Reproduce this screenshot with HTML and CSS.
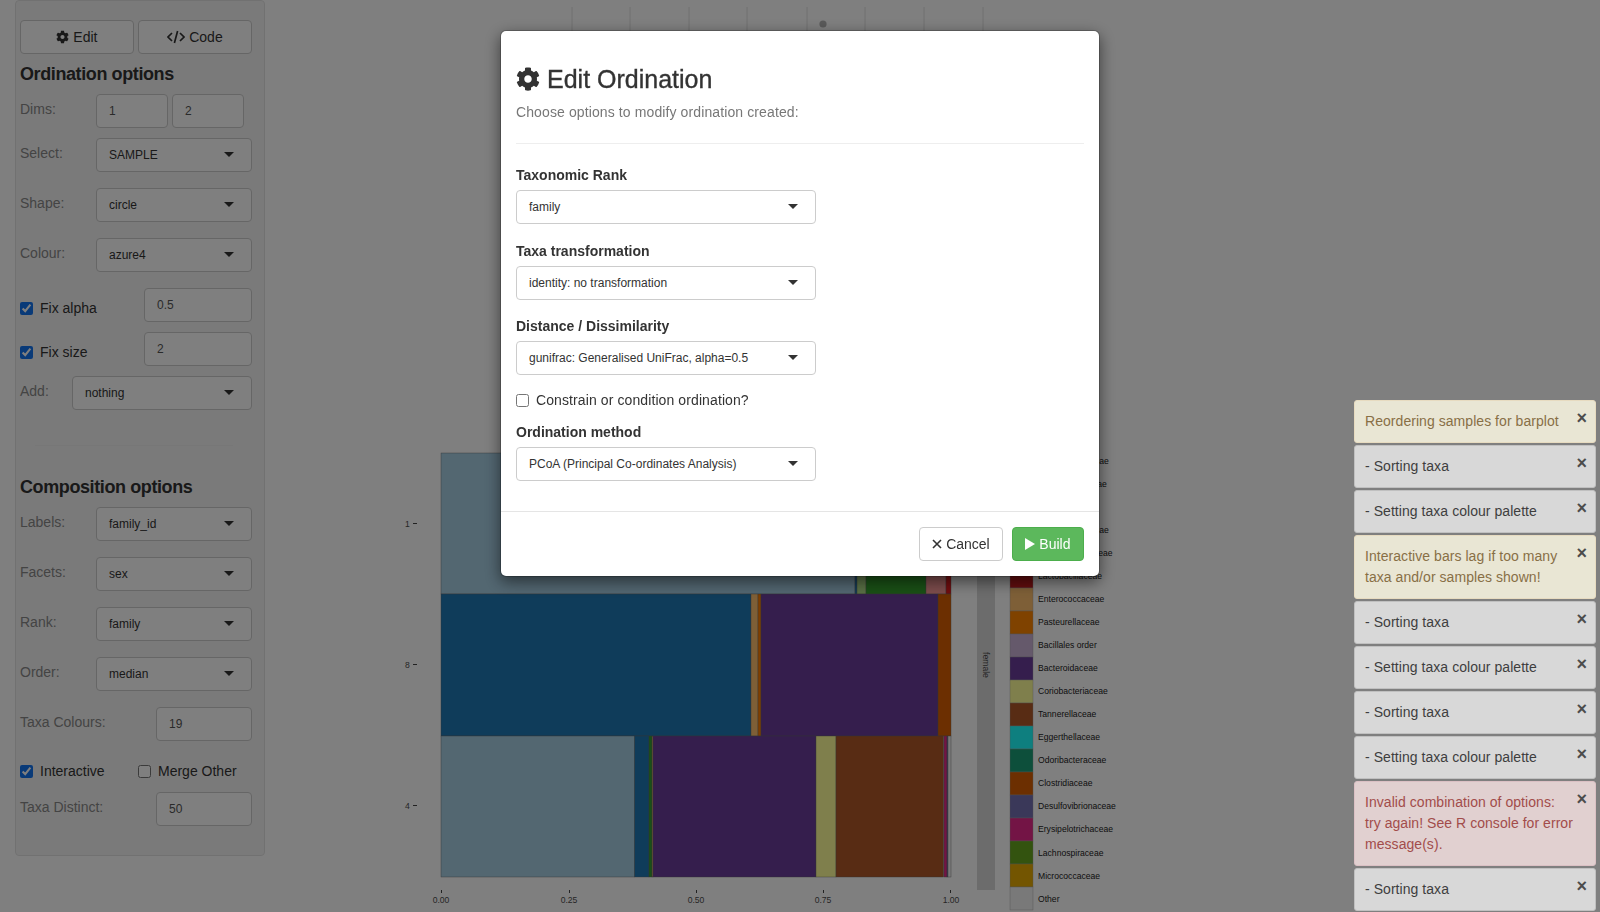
FILE: index.html
```html
<!DOCTYPE html>
<html lang="en">
<head>
  <meta charset="UTF-8" />
  <title>Edit Ordination</title>
  <link rel="stylesheet" href="styles.css">
</head>
<body>
  <svg class="icon-defs" width="0" height="0">
    <symbol id="cog" viewBox="0 0 512 512">
      <path d="M487.4 315.7l-42.6-24.6c4.3-23.2 4.3-47 0-70.2l42.6-24.6c4.9-2.8 7.1-8.6 5.5-14-11.1-35.6-30-67.8-54.7-94.6-3.8-4.1-10-5.1-14.8-2.3L380.8 110c-17.9-15.4-38.5-27.3-60.8-35.1V25.8c0-5.6-3.9-10.5-9.4-11.7-36.7-8.2-74.3-7.8-109.2 0-5.5 1.2-9.4 6.1-9.4 11.7V75c-22.2 7.9-42.8 19.8-60.8 35.1L88.7 85.5c-4.9-2.8-11-1.9-14.8 2.3-24.7 26.7-43.6 58.9-54.7 94.6-1.7 5.4.6 11.2 5.5 14L67.3 221c-4.3 23.2-4.3 47 0 70.2l-42.6 24.6c-4.9 2.8-7.1 8.6-5.5 14 11.1 35.6 30 67.8 54.7 94.6 3.8 4.1 10 5.1 14.8 2.3l42.6-24.6c17.9 15.4 38.5 27.3 60.8 35.1v49.2c0 5.6 3.9 10.5 9.4 11.7 36.7 8.2 74.3 7.8 109.2 0 5.5-1.2 9.4-6.1 9.4-11.7v-49.2c22.2-7.9 42.8-19.8 60.8-35.1l42.6 24.6c4.9 2.8 11 1.9 14.8-2.3 24.7-26.7 43.6-58.9 54.7-94.6 1.5-5.5-.7-11.3-5.6-14.1zM256 336c-44.1 0-80-35.9-80-80s35.9-80 80-80 80 35.9 80 80-35.9 80-80 80z" fill="currentColor"/>
    </symbol>
  </svg>

  <div class="page">
    <div class="sidebar">
      <div class="well">
        <div class="btn-row">
          <button class="btn"><svg class="ico-cog"><use href="#cog"/></svg> Edit</button>
          <button class="btn">
            <svg class="ico-code" viewBox="0 0 18 14"><path d="M5 3 1 7l4 4M13 3l4 4-4 4M10.6 1 7.4 13" fill="none" stroke="currentColor" stroke-width="1.7"/></svg> Code
          </button>
        </div>

        <h4 class="side-title">Ordination options</h4>

        <div class="opt-row dims-row">
          <label class="opt-label w-76">Dims:</label>
          <div class="input w-72">1</div>
          <div class="input w-72">2</div>
        </div>
        <div class="opt-row">
          <label class="opt-label w-76">Select:</label>
          <div class="select grow">SAMPLE<span class="caret"></span></div>
        </div>
        <div class="opt-row">
          <label class="opt-label w-76">Shape:</label>
          <div class="select grow">circle<span class="caret"></span></div>
        </div>
        <div class="opt-row">
          <label class="opt-label w-76">Colour:</label>
          <div class="select grow">azure4<span class="caret"></span></div>
        </div>
        <div class="opt-row">
          <label class="check-label w-124"><input type="checkbox" checked /> Fix alpha</label>
          <div class="input grow">0.5</div>
        </div>
        <div class="opt-row tight">
          <label class="check-label w-124"><input type="checkbox" checked /> Fix size</label>
          <div class="input grow">2</div>
        </div>
        <div class="opt-row tight">
          <label class="opt-label w-52">Add:</label>
          <div class="select grow">nothing<span class="caret"></span></div>
        </div>

        <hr class="side-rule" />

        <h4 class="side-title comp-title">Composition options</h4>

        <div class="opt-row tight">
          <label class="opt-label w-76">Labels:</label>
          <div class="select grow">family_id<span class="caret"></span></div>
        </div>
        <div class="opt-row">
          <label class="opt-label w-76">Facets:</label>
          <div class="select grow">sex<span class="caret"></span></div>
        </div>
        <div class="opt-row">
          <label class="opt-label w-76">Rank:</label>
          <div class="select grow">family<span class="caret"></span></div>
        </div>
        <div class="opt-row">
          <label class="opt-label w-76">Order:</label>
          <div class="select grow">median<span class="caret"></span></div>
        </div>
        <div class="opt-row">
          <label class="opt-label w-136">Taxa Colours:</label>
          <div class="input grow">19</div>
        </div>
        <div class="check-row">
          <label class="check-plain w-118"><input type="checkbox" checked /> Interactive</label>
          <label class="check-plain"><input type="checkbox" /> Merge Other</label>
        </div>
        <div class="opt-row tight">
          <label class="opt-label w-136">Taxa Distinct:</label>
          <div class="input grow">50</div>
        </div>
      </div>
    </div>

    <div class="plot-col">
      <svg class="plot" viewBox="280 0 1320 912" width="1320" height="912">
        <g stroke="#e0e0e0" stroke-width="1">
          <path d="M572 7V40M630 7V40M689 7V40M747 7V40M807 7V40M865 7V40M924 7V40M983 7V40"/>
        </g>
        <circle cx="823" cy="24" r="3.6" fill="#b4b4b4"/>

        <g stroke="#666" stroke-width="0.4">
          <rect x="441" y="453" width="414" height="141" fill="#a6cee3"/>
          <rect x="855" y="453" width="2" height="141" fill="#1f78b4"/>
          <rect x="857" y="453" width="9" height="141" fill="#b2df8a"/>
          <rect x="866" y="453" width="60" height="141" fill="#33a02c"/>
          <rect x="926" y="453" width="20" height="141" fill="#fb9a99"/>
          <rect x="946" y="453" width="5" height="141" fill="#e31a1c"/>

          <rect x="441" y="594" width="310" height="142" fill="#1f78b4"/>
          <rect x="751" y="594" width="7" height="142" fill="#fdbf6f"/>
          <rect x="758" y="594" width="3" height="142" fill="#ff7f00"/>
          <rect x="761" y="594" width="177" height="142" fill="#6a3d9a"/>
          <rect x="938" y="594" width="13" height="142" fill="#d95f02"/>

          <rect x="441" y="736" width="193.5" height="141" fill="#a6cee3"/>
          <rect x="634.5" y="736" width="14.5" height="141" fill="#1f78b4"/>
          <rect x="649" y="736" width="3" height="141" fill="#33a02c"/>
          <rect x="652" y="736" width="1" height="141" fill="#fdbf6f"/>
          <rect x="653" y="736" width="163" height="141" fill="#6a3d9a"/>
          <rect x="816" y="736" width="20" height="141" fill="#ffff99"/>
          <rect x="836" y="736" width="107.5" height="141" fill="#b15928"/>
          <rect x="944" y="736" width="3" height="141" fill="#e7298a"/>
          <rect x="947" y="736" width="1" height="141" fill="#7570b3"/>
          <rect x="948" y="736" width="3" height="141" fill="#f2f2f2"/>
        </g>

        <rect x="977" y="453" width="18" height="437" fill="#d9d9d9"/>
        <text class="tick" transform="translate(983 665) rotate(90)" text-anchor="middle">female</text>

        <g class="tick">
          <text x="405" y="527">1</text>
          <text x="405" y="668">8</text>
          <text x="405" y="809">4</text>
          <text x="441" y="903" text-anchor="middle">0.00</text>
          <text x="569" y="903" text-anchor="middle">0.25</text>
          <text x="696" y="903" text-anchor="middle">0.50</text>
          <text x="823" y="903" text-anchor="middle">0.75</text>
          <text x="951" y="903" text-anchor="middle">1.00</text>
        </g>
        <path d="M413 523.5h4M413 664.5h4M413 805.5h4M441.5 890v3M569.5 890v3M696.5 890v3M823.5 890v3M950.5 890v3" stroke="#444" stroke-width="1"/>

        <g stroke="#a0a0a0" stroke-width="0.4">
          <rect x="1010" y="450" width="23" height="23" fill="#a6cee3"/>
          <rect x="1010" y="473" width="23" height="23" fill="#1f78b4"/>
          <rect x="1010" y="496" width="23" height="23" fill="#b2df8a"/>
          <rect x="1010" y="519" width="23" height="23" fill="#33a02c"/>
          <rect x="1010" y="542" width="23" height="23" fill="#fb9a99"/>
          <rect x="1010" y="565" width="23" height="23" fill="#c51a1c"/>
          <rect x="1010" y="588" width="23" height="23" fill="#fdbf6f"/>
          <rect x="1010" y="611" width="23" height="23" fill="#ff8500"/>
          <rect x="1010" y="634" width="23" height="23" fill="#cab2d6"/>
          <rect x="1010" y="657" width="23" height="23" fill="#6a3d9a"/>
          <rect x="1010" y="680" width="23" height="23" fill="#ffff99"/>
          <rect x="1010" y="703" width="23" height="23" fill="#b15928"/>
          <rect x="1010" y="726" width="23" height="23" fill="#1cffff"/>
          <rect x="1010" y="749" width="23" height="23" fill="#1b9e77"/>
          <rect x="1010" y="772" width="23" height="23" fill="#d95f02"/>
          <rect x="1010" y="795" width="23" height="23" fill="#7570b3"/>
          <rect x="1010" y="818" width="23" height="23" fill="#e7298a"/>
          <rect x="1010" y="841" width="23" height="23" fill="#66a61e"/>
          <rect x="1010" y="864" width="23" height="23" fill="#e6ab02"/>
          <rect x="1010" y="887" width="23" height="23" fill="#f2f2f2"/>
        </g>
        <g class="legend-text">
          <text x="1038" y="463.5">Ruminococcaceae</text>
          <text x="1038" y="486.5">Streptococcaceae</text>
          <text x="1038" y="509.5">Rikenellaceae</text>
          <text x="1038" y="532.5">Bifidobacteriaceae</text>
          <text x="1038" y="555.5">Enterobacteriaceae</text>
          <text x="1038" y="578.5">Lactobacillaceae</text>
          <text x="1038" y="601.5">Enterococcaceae</text>
          <text x="1038" y="624.5">Pasteurellaceae</text>
          <text x="1038" y="647.5">Bacillales order</text>
          <text x="1038" y="670.5">Bacteroidaceae</text>
          <text x="1038" y="693.5">Coriobacteriaceae</text>
          <text x="1038" y="716.5">Tannerellaceae</text>
          <text x="1038" y="739.5">Eggerthellaceae</text>
          <text x="1038" y="762.5">Odoribacteraceae</text>
          <text x="1038" y="785.5">Clostridiaceae</text>
          <text x="1038" y="808.5">Desulfovibrionaceae</text>
          <text x="1038" y="831.5">Erysipelotrichaceae</text>
          <text x="1038" y="856">Lachnospiraceae</text>
          <text x="1038" y="879">Micrococcaceae</text>
          <text x="1038" y="902">Other</text>
        </g>
      </svg>
    </div>
  </div>

  <div class="backdrop"></div>

  <div class="modal-wrap">
    <div class="modal">
      <div class="modal-body">
        <h3 class="modal-title"><svg class="ico-title"><use href="#cog"/></svg> Edit Ordination</h3>
        <p class="modal-sub">Choose options to modify ordination created:</p>
        <hr class="modal-rule" />

        <label class="field-label first">Taxonomic Rank</label>
        <div class="select wide">family<span class="caret"></span></div>

        <label class="field-label">Taxa transformation</label>
        <div class="select wide">identity: no transformation<span class="caret"></span></div>

        <label class="field-label third">Distance / Dissimilarity</label>
        <div class="select wide">gunifrac: Generalised UniFrac, alpha=0.5<span class="caret"></span></div>

        <label class="modal-check"><input type="checkbox" /> Constrain or condition ordination?</label>

        <label class="field-label method">Ordination method</label>
        <div class="select wide">PCoA (Principal Co-ordinates Analysis)<span class="caret"></span></div>
      </div>
      <div class="modal-footer">
        <button class="btn btn-cancel">
          <svg class="ico-x" viewBox="0 0 10 10"><path d="M1 1l8 8M9 1l-8 8" fill="none" stroke="currentColor" stroke-width="1.6"/></svg> Cancel
        </button>
        <button class="btn btn-build">
          <svg class="ico-play" viewBox="0 0 10 12"><path d="M0 0l10 6-10 6z" fill="currentColor"/></svg> Build
        </button>
      </div>
    </div>
  </div>

  <div class="notifications">
    <div class="note warn">Reordering samples for barplot<span class="note-x">×</span></div>
    <div class="note">- Sorting taxa<span class="note-x">×</span></div>
    <div class="note">- Setting taxa colour palette<span class="note-x">×</span></div>
    <div class="note warn">Interactive bars lag if too many taxa and/or samples shown!<span class="note-x">×</span></div>
    <div class="note">- Sorting taxa<span class="note-x">×</span></div>
    <div class="note">- Setting taxa colour palette<span class="note-x">×</span></div>
    <div class="note">- Sorting taxa<span class="note-x">×</span></div>
    <div class="note">- Setting taxa colour palette<span class="note-x">×</span></div>
    <div class="note error">Invalid combination of options: try again! See R console for error message(s).<span class="note-x">×</span></div>
    <div class="note">- Sorting taxa<span class="note-x">×</span></div>
  </div>
</body>
</html>
```

FILE: styles.css
```css
* {
  box-sizing: border-box;
}

html, body {
  margin: 0;
  height: 912px;
  overflow: hidden;
}

body {
  font-family: "Liberation Sans", Arial, sans-serif;
  font-size: 14px;
  line-height: 20px;
  color: #333;
  background: #fff;
}

.icon-defs {
  display: block;
  height: 0;
}

.page {
  display: flex;
  height: 912px;
}

.sidebar {
  width: 280px;
  flex: none;
  padding-left: 15px;
}

.well {
  width: 250px;
  height: 856px;
  padding: 19px 12px 0 4px;
  background: #f5f5f5;
  border: 1px solid #e3e3e3;
  border-radius: 4px;
}

.btn-row {
  display: flex;
  gap: 4px;
}

.btn {
  height: 34px;
  padding: 0 12px;
  font: inherit;
  color: #333;
  background: #fff;
  border: 1px solid #ccc;
  border-radius: 4px;
}

.btn-row .btn {
  flex: 1;
}

.ico-cog {
  width: 13px;
  height: 14px;
  vertical-align: -2px;
}

.ico-code {
  width: 18px;
  height: 14px;
  vertical-align: -2px;
}

.side-title {
  margin: 10px 0;
  font-size: 18px;
  line-height: 20px;
  font-weight: bold;
  letter-spacing: -0.4px;
}

.comp-title {
  margin-top: 0;
}

.opt-row {
  display: flex;
  margin-top: 16px;
}

.opt-row.tight {
  margin-top: 10px;
}

.dims-row {
  margin-top: 0;
  margin-bottom: -6px;
  gap: 4px;
}

.opt-label {
  flex: none;
  padding-top: 5px;
  color: #888;
}

.dims-row .opt-label {
  margin-right: -4px;
}

.w-52 { width: 52px; }
.w-72 { width: 72px; }
.w-76 { width: 76px; }
.w-118 { width: 118px; }
.w-124 { width: 124px; }
.w-136 { width: 136px; }
.grow { flex: 1; }

.input,
.select {
  position: relative;
  height: 34px;
  padding: 0 12px;
  font-size: 12px;
  line-height: 32px;
  color: #333;
  background: #fff;
  border: 1px solid #ccc;
  border-radius: 4px;
}

.input {
  color: #555;
}

.caret {
  position: absolute;
  top: 13px;
  right: 17px;
  border-top: 5px solid #333;
  border-left: 5px solid transparent;
  border-right: 5px solid transparent;
}

.check-label,
.check-plain,
.modal-check {
  display: flex;
  align-items: center;
  gap: 7px;
}

.check-label {
  flex: none;
  padding-top: 6px;
}

input[type="checkbox"] {
  width: 13px;
  height: 13px;
  margin: 0;
  accent-color: #1274f0;
}

.side-rule {
  margin: 35px 19px 31px 15px;
  border: 0;
  border-top: 1px solid #eee;
}

.check-row {
  display: flex;
  height: 22px;
  margin-top: 19px;
  align-items: center;
}

.plot-col {
  flex: 1;
}

.plot {
  display: block;
}

.tick {
  font-size: 8.6px;
  fill: #4d4d4d;
}

.legend-text {
  font-size: 8.6px;
  fill: #222;
}

.backdrop {
  position: fixed;
  inset: 0;
  background: rgba(0, 0, 0, 0.5);
}

.modal-wrap {
  position: fixed;
  inset: 0;
  padding-top: 30px;
}

.modal {
  width: 600px;
  height: 547px;
  margin: 0 auto;
  background: #fff;
  border: 1px solid rgba(0, 0, 0, 0.2);
  border-radius: 6px;
  box-shadow: 0 5px 15px rgba(0, 0, 0, 0.5);
  background-clip: padding-box;
}

.modal-body {
  padding: 35px 15px 15px;
  height: 480px;
}

.modal-title {
  display: flex;
  align-items: center;
  gap: 7px;
  margin: 0 0 10px;
  font-size: 25px;
  line-height: 26px;
  font-weight: normal;
  -webkit-text-stroke: 0.35px #333;
}

.ico-title {
  width: 24px;
  height: 24px;
}

.modal-sub {
  margin: 0;
  color: #777;
  letter-spacing: 0.11px;
}

.modal-rule {
  margin: 21px 0;
  border: 0;
  border-top: 1px solid #eee;
}

.field-label {
  display: block;
  margin: 17px 0 5px;
  font-weight: bold;
}

.field-label.first {
  margin-top: 0;
}

.field-label.third {
  margin-top: 16px;
}

.field-label.method {
  margin-top: 12px;
}

.select.wide {
  width: 300px;
}

.modal-check {
  margin-top: 15px;
  height: 20px;
  letter-spacing: 0.1px;
}

.modal-footer {
  display: flex;
  justify-content: flex-end;
  gap: 9px;
  padding: 15px;
  border-top: 1px solid #e5e5e5;
}

.btn-cancel {
  width: 84px;
  padding: 0;
}

.btn-build {
  width: 72px;
  padding: 0;
  color: #fff;
  background: #5cb85c;
  border-color: #4cae4c;
}

.ico-x {
  width: 10px;
  height: 10px;
}

.ico-play {
  width: 10px;
  height: 12px;
  vertical-align: -1px;
}

.notifications {
  position: fixed;
  right: 4px;
  bottom: 1px;
  width: 242px;
  display: flex;
  flex-direction: column;
  gap: 2px;
}

.note {
  position: relative;
  padding: 10px 22px 10px 10px;
  line-height: 21px;
  letter-spacing: 0.05px;
  color: #333;
  background: #e8e8e8;
  border: 1px solid #ccc;
  border-radius: 3px;
  opacity: 0.85;
}

.note.warn {
  color: #8a6d3b;
  background: #fcf8e3;
  border-color: #faebcc;
}

.note.error {
  color: #a94442;
  background: #f2dede;
  border-color: #ebccd1;
}

.note-x {
  position: absolute;
  top: 7px;
  right: 8px;
  font-size: 18px;
  line-height: 20px;
  font-weight: bold;
  color: #444;
}
```
